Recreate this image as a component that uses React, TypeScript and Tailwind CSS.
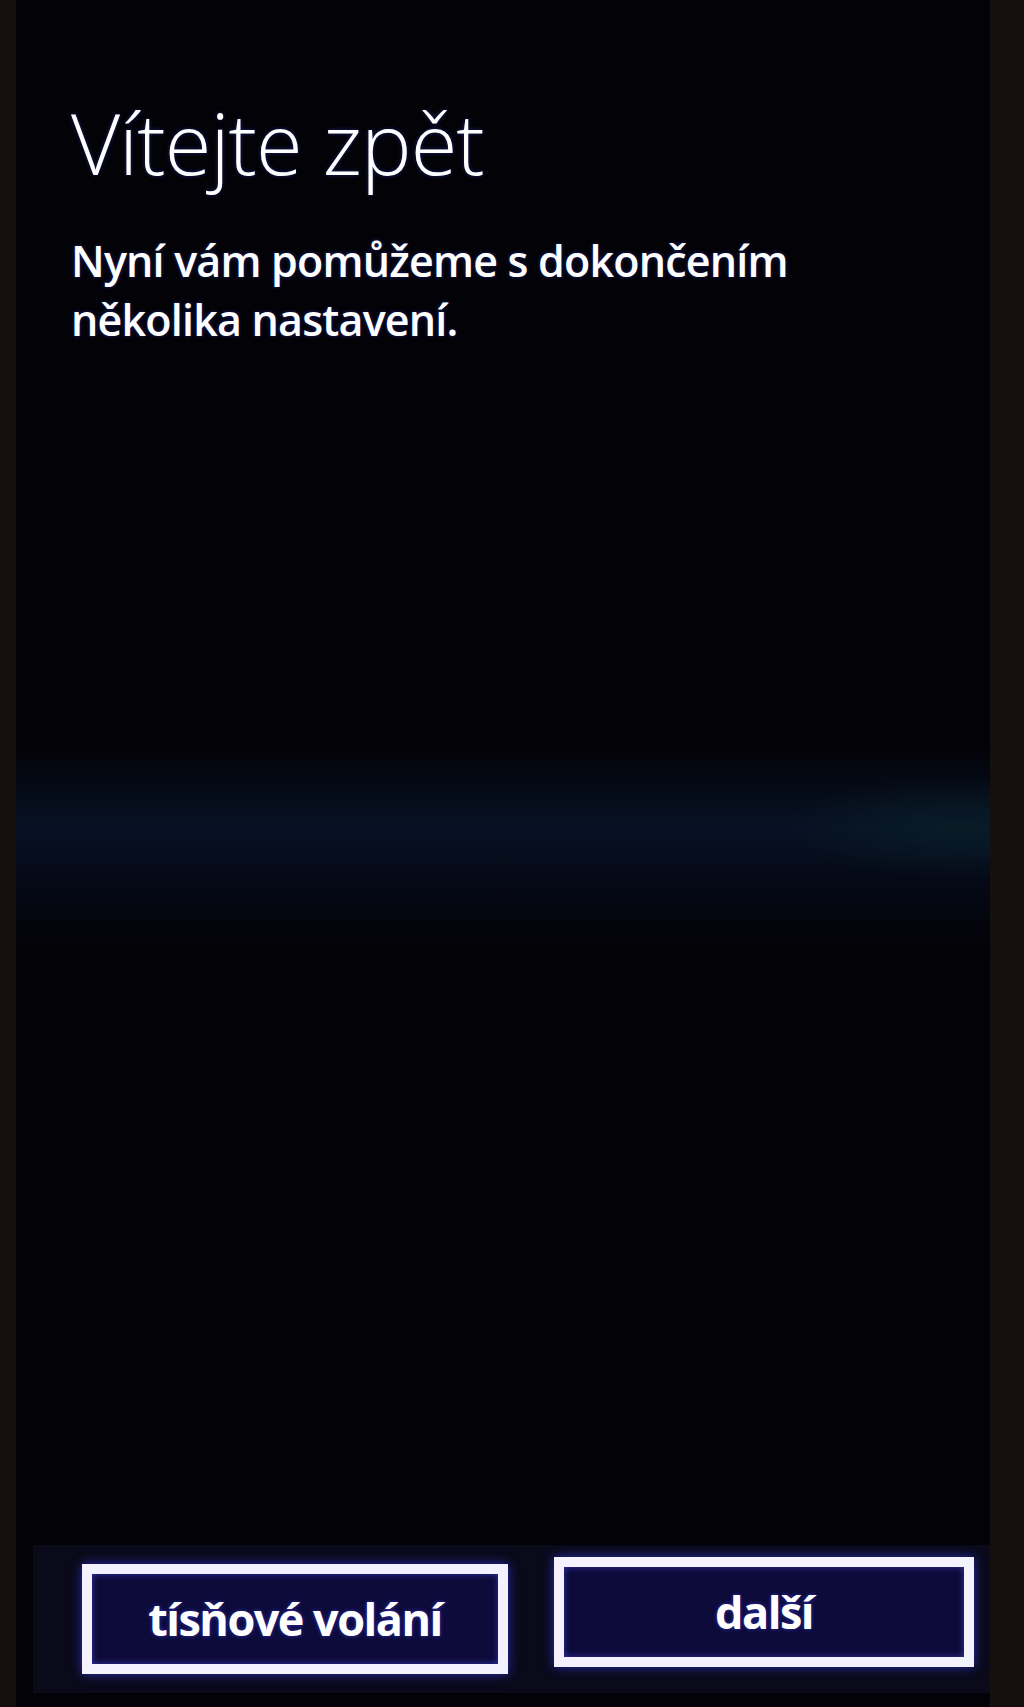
export default function App() {
    return (
        <div className="w-[1024px] h-[1707px] bg-[#15100e] flex pl-[16px] pr-[34px] overflow-hidden">
            {/* Phone screen */}
            <div className="flex-1 flex flex-col bg-[radial-gradient(ellipse_18%_3%_at_97%_48.5%,#081c26,transparent),linear-gradient(to_bottom,#030206_0%,#030206_43.5%,#071124_48.5%,#050a18_51%,#030206_56%,#030206_100%)] [font-family:'Open_Sans','Noto_Sans',sans-serif] text-white">
                <div className="pl-[55px] pt-[100px]">
                    <h1 className="text-[85px] leading-none font-light tracking-[-1px] [text-shadow:0_0_4px_#1a2070]">
                        Vítejte zpět
                    </h1>
                    <p className="mt-[46px] text-[43px] leading-[59px] font-semibold tracking-[-0.8px] w-[800px] [text-shadow:0_0_4px_#1a2070]">
                        Nyní vám pomůžeme s dokončením několika nastavení.
                    </p>
                </div>

                <div className="flex-1" />

                {/* App bar */}
                <div className="ml-[17px] h-[148px] bg-[#0a0a1b] flex items-center pl-[49px] gap-[46px]">
                    <button className="w-[426px] h-[110px] border-[10px] border-[#f4f2ff] bg-[#0d0b3a] shadow-[0_0_10px_#2b2bb0,inset_0_0_6px_#3434b0] flex items-center justify-center text-[45px] font-bold tracking-[-1.5px] text-white [text-shadow:0_0_4px_#3030b0]">
                        tísňové volání
                    </button>
                    <button className="w-[420px] h-[110px] -mt-[14px] border-[10px] border-[#f4f2ff] bg-[#0d0b3a] shadow-[0_0_10px_#2b2bb0,inset_0_0_6px_#3434b0] flex items-center justify-center text-[45px] font-bold tracking-[-1.5px] text-white [text-shadow:0_0_4px_#3030b0]">
                        další
                    </button>
                </div>
                <div className="h-[14px]" />
            </div>
        </div>
    );
}
